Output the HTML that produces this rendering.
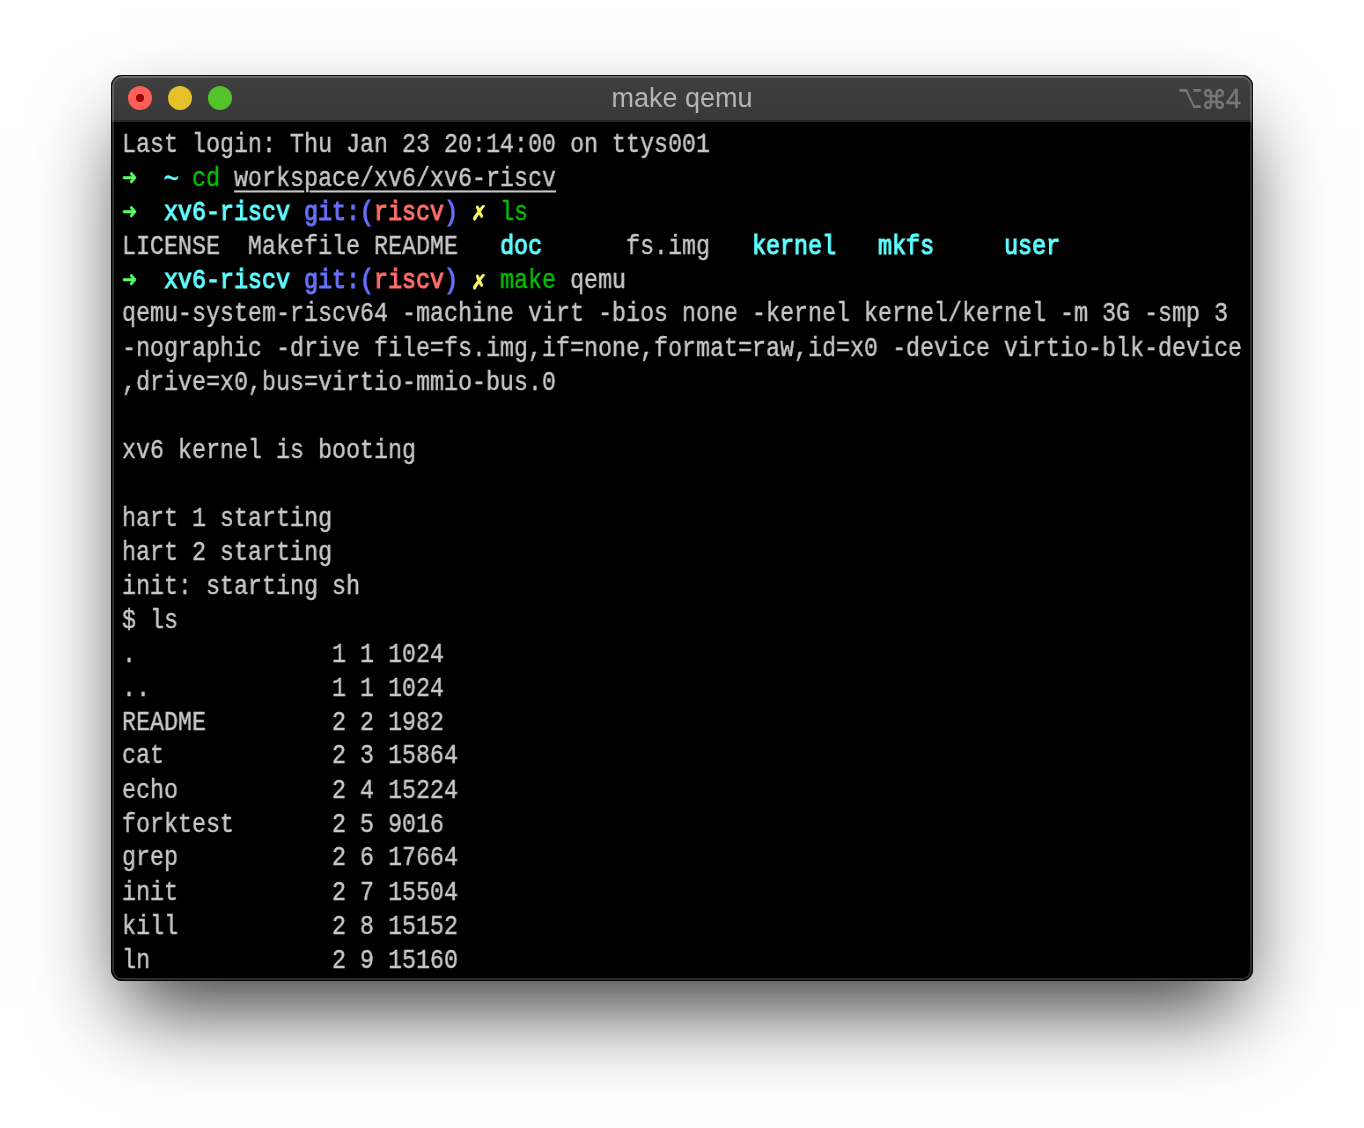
<!DOCTYPE html>
<html lang="en">
<head>
<meta charset="utf-8">
<title>make qemu</title>
<style>
html,body{margin:0;padding:0;background:#fff;}
body{width:1364px;height:1128px;position:relative;overflow:hidden;}
.win{position:absolute;left:111px;top:75px;width:1142px;height:906px;border-radius:11px;background:#000;
  box-shadow:0 41px 81px -14px rgba(0,0,0,.78);overflow:hidden;}
.frame{position:absolute;inset:0;border:1px solid rgba(0,0,0,.75);border-top-color:#0a0a0a;border-radius:11px;box-sizing:border-box;pointer-events:none;z-index:5;box-shadow:inset 0 0 0 2px rgba(255,255,255,.17);}
.bar{position:absolute;left:0;top:0;right:0;height:47px;background:linear-gradient(#404040,#383838);border-bottom:2px solid #252525;box-sizing:border-box;
  box-shadow:inset 0 2px 0 #5a5a5a, inset 0 3px 0 #444;}
.dot{position:absolute;top:11px;width:24px;height:24px;border-radius:50%;}
.d1{left:17px;background:#fe5f57;}
.d1:after{content:"";position:absolute;left:8px;top:8px;width:8px;height:8px;border-radius:50%;background:#990000;}
.d2{left:57px;background:#e6c029;}
.d3{left:97px;background:#53c22b;}
.title{position:absolute;left:0;right:0;top:0;height:46px;line-height:46px;text-align:center;color:#b5b5b5;
  font-family:"Liberation Sans",sans-serif;font-size:27px;}
.key{position:absolute;left:0;top:0;right:0;height:46px;color:#787878;font-family:"DejaVu Sans","Liberation Sans",sans-serif;font-size:24px;line-height:28px;}
.key span{position:absolute;top:8px;transform-origin:0 0;-webkit-text-stroke:.5px #787878;}
.k1{left:1067px;top:3.4px !important;transform:scale(.88,1.37);-webkit-text-stroke:0 !important;}
.k2{left:1090px;top:10px !important;transform:scale(1.08,1.1);}
.k3{left:1115px;top:10px !important;font-family:"Liberation Sans",sans-serif;font-size:27px;-webkit-text-stroke:.4px #787878 !important;}
.term{position:absolute;left:11px;top:53px;width:1296px;color:#c7c7c7;
  font-family:"Liberation Mono","DejaVu Sans Mono",monospace;font-size:26.5px;line-height:32.6923px;white-space:pre;
  transform:scale(.88036,1.04);transform-origin:0 0;}
.term div{height:32.6923px;}
.term{-webkit-text-stroke:.4px;}
b{font-weight:normal;-webkit-text-stroke:1.1px;}
.a,.x{font-weight:bold;}
.a,.x,.t{display:inline-block;width:1ch;height:32.6923px;vertical-align:top;}
.a{-webkit-text-stroke:.5px #5ffa68;transform:translate(.6px,1px) scale(1.06,1);}
.t{transform:translate(0,2.3px) scale(1.1,1.25);-webkit-text-stroke:.3px;}
.x{-webkit-text-stroke:.8px #fffc67;transform:translate(0,1px) scale(1,.9);}
.title,.key,.term{will-change:transform;}
.g{color:#5ffa68}.c{color:#60fdff}.bl{color:#6871ff}.r{color:#ff6e67}.y{color:#fffc67}.gn{color:#00c200}
u{text-decoration:underline;text-underline-offset:4px;text-decoration-thickness:2px;}
</style>
</head>
<body>
<div class="win">
  <div class="bar">
    <span class="dot d1"></span><span class="dot d2"></span><span class="dot d3"></span>
    <div class="title">make qemu</div>
    <div class="key"><span class="k1">⌥</span><span class="k2">⌘</span><span class="k3">4</span></div>
  </div>
  <div class="term"><div>Last login: Thu Jan 23 20:14:00 on ttys001</div><div><b class="g a">➜</b>  <b class="c t">~</b> <span class="gn">cd</span> <u>workspace/xv6/xv6-riscv</u></div><div><b class="g a">➜</b>  <b class="c">xv6-riscv</b> <b class="bl">git:(</b><b class="r">riscv</b><b class="bl">)</b> <b class="y x">✗</b> <span class="gn">ls</span></div><div>LICENSE  Makefile README   <b class="c">doc</b>      fs.img   <b class="c">kernel</b>   <b class="c">mkfs</b>     <b class="c">user</b></div><div><b class="g a">➜</b>  <b class="c">xv6-riscv</b> <b class="bl">git:(</b><b class="r">riscv</b><b class="bl">)</b> <b class="y x">✗</b> <span class="gn">make</span> qemu</div><div>qemu-system-riscv64 -machine virt -bios none -kernel kernel/kernel -m 3G -smp 3 </div><div>-nographic -drive file=fs.img,if=none,format=raw,id=x0 -device virtio-blk-device</div><div>,drive=x0,bus=virtio-mmio-bus.0</div><div> </div><div>xv6 kernel is booting</div><div> </div><div>hart 1 starting</div><div>hart 2 starting</div><div>init: starting sh</div><div>$ ls</div><div>.              1 1 1024</div><div>..             1 1 1024</div><div>README         2 2 1982</div><div>cat            2 3 15864</div><div>echo           2 4 15224</div><div>forktest       2 5 9016</div><div>grep           2 6 17664</div><div>init           2 7 15504</div><div>kill           2 8 15152</div><div>ln             2 9 15160</div></div>
  <div class="frame"></div>
</div>
</body>
</html>
